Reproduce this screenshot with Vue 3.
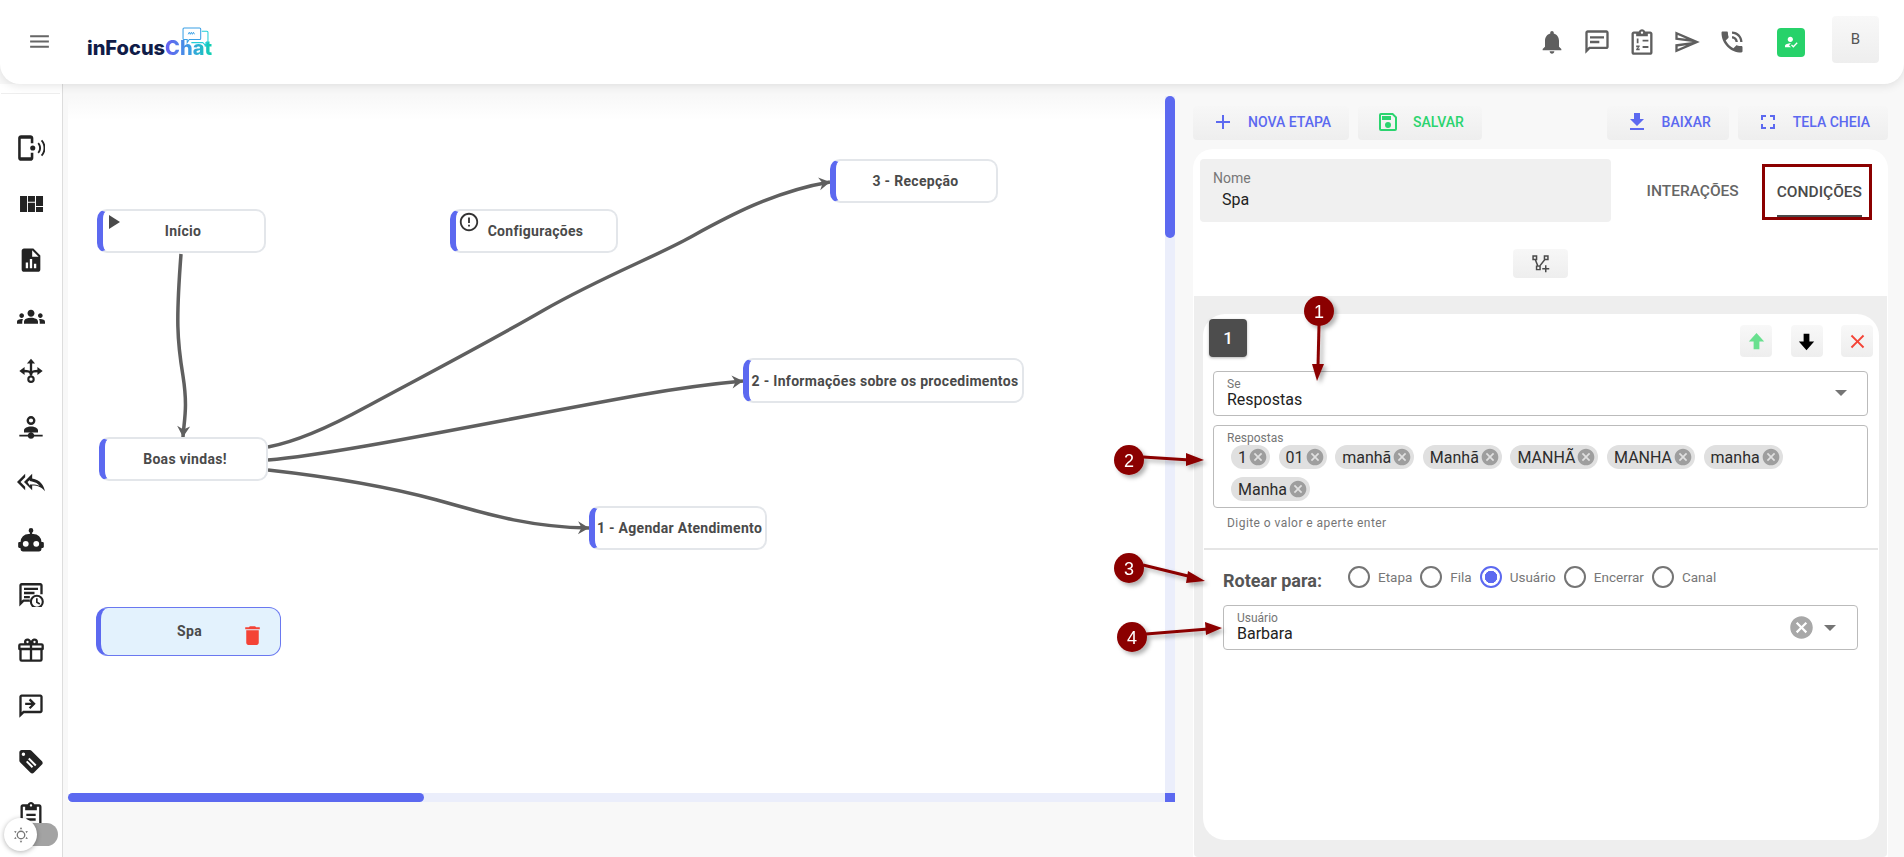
<script setup>
const sideIcons = [
  { id: 'ring', fill: 'M3.500 1h8C12.900 1 14 2.100 14 3.500V8h-2.200V4H3.200v16h8.600v-4H14v4.500c0 1.400-1.100 2.500-2.500 2.500h-8C2.100 23 1 21.900 1 20.500V3.500C1 2.100 2.100 1 3.500 1zM13.500 9.800a2.200 2.200 0 1 1 0 4.400a2.200 2.200 0 0 1 0-4.400zM17.600 8.400l1.100-1.100c2.500 2.500 2.500 6.900 0 9.400l-1.100-1.100c1.800-1.900 1.800-5.300 0-7.200zM20.500 6l1.100-1.100c3.800 3.800 3.800 10.400 0 14.200L20.500 18c3-3.200 3-8.800 0-12z' },
  { id: 'quilt', fill: 'M2.600 5.100h6v13.800h-6zM9.400 5.100h6V10h-6zM9.400 11h6v7.900h-6zM16.300 5.100h6v8.600h-6zM16.300 14.600h6v4.300h-6z' },
  { id: 'file', dy: 1, fill: 'M14 2H6C4.900 2 4 2.900 4 4v16c0 1.100.9 2 2 2h12c1.100 0 2-.9 2-2V8l-6-6zM9.500 19h-2v-5h2v5zm3.500 0h-2v-8h2v8zm3.500 0h-2v-4h2v4zM13 9V3.500L18.500 9H13z' },
  { id: 'groups', dy: 1.500, fill: 'M12 12.750c1.630 0 3.070.39 4.240.9 1.080.48 1.760 1.560 1.760 2.730V18H6v-1.610c0-1.180.68-2.260 1.760-2.730 1.170-.52 2.610-.91 4.240-.91zM4 13c1.100 0 2-.9 2-2s-.9-2-2-2-2 .9-2 2 .9 2 2 2zm1.130 1.100c-.37-.06-.74-.1-1.130-.1-.99 0-1.930.21-2.780.58C.48 14.900 0 15.620 0 16.430V18h4.500v-1.610c0-.83.23-1.610.63-2.290zM20 13c1.100 0 2-.9 2-2s-.9-2-2-2-2 .9-2 2 .9 2 2 2zm4 3.430c0-.81-.48-1.530-1.220-1.850-.85-.37-1.790-.58-2.780-.58-.39 0-.76.04-1.130.1.4.68.63 1.460.63 2.290V18H24v-1.570zM12 6c1.660 0 3 1.340 3 3s-1.340 3-3 3-3-1.340-3-3 1.340-3 3-3z' },
  { id: 'fork', fill: 'M12 1.500l3.500 4h-7zM2 12l4.500-3.500v7zM22 12l-4.500-3.500v7zM12 15.800a3.200 3.200 0 1 1 0 6.400a3.200 3.200 0 0 1 0-6.400zm0 1.800a1.400 1.400 0 1 0 0 2.800a1.400 1.400 0 0 0 0-2.800z', stroke: 'M12 16V5M12 15.500C12 12 9 12 5.500 12M12 15.500C12 12 15 12 18.500 12' },
  { id: 'person', dy: 1.500, fill: 'M12 2a3.800 3.800 0 1 1 0 7.600A3.800 3.800 0 0 1 12 2zM12 4a1.800 1.800 0 1 0 0 3.600A1.800 1.800 0 0 0 12 4zM12 11c3.200 0 6 1.400 6 3.200V16H6v-1.800C6 12.400 8.800 11 12 11zM2 18h7.200a3 3 0 0 1 5.600 0H22v1.600h-7.200a3 3 0 0 1-5.600 0H2z' },
  { id: 'reply', fill: 'M7 8V5l-7 7 7 7v-3l-4-4 4-4zm6 1V5l-7 7 7 7v-4.100c5 0 8.500 1.600 11 5.100-1-5-4-10-11-11zm-2 1.200v1l1.800.3c3 .5 5.200 1.900 6.700 3.900-2-.9-4.200-1.300-6.500-1.300h-2v1.100L9 12l2-1.800z' },
  { id: 'robot', dy: 1.500, fill: 'M12 2a2 2 0 0 1 2 2c0 .74-.4 1.390-1 1.730V7h1a7 7 0 0 1 7 7h1a1 1 0 0 1 1 1v3a1 1 0 0 1-1 1h-1v1a2 2 0 0 1-2 2H5a2 2 0 0 1-2-2v-1H2a1 1 0 0 1-1-1v-3a1 1 0 0 1 1-1h1a7 7 0 0 1 7-7h1V5.730C10.400 5.390 10 4.740 10 4a2 2 0 0 1 2-2zM7.500 13a2.500 2.500 0 1 0 0 5a2.500 2.500 0 0 0 0-5zm9 0a2.500 2.500 0 1 0 0 5a2.500 2.500 0 0 0 0-5z' },
  { id: 'sched', dy: 1.500, fill: 'M4 2h16c1.100 0 2 .9 2 2v7.500h-2V4H4v13.200L5.200 16H11v2H6l-4 4V4c0-1.100.9-2 2-2zM6 6h12v2H6zM6 9.500h9v2H6zM6 13h5v2H6zM17 12a6 6 0 1 1 0 12a6 6 0 0 1 0-12zm0 1.800a4.200 4.200 0 1 0 0 8.400a4.200 4.200 0 0 0 0-8.400zm-.7 1.200h1.400v3l2.200 1.300-.7 1.200-2.900-1.700z' },
  { id: 'gift', dy: 1, fill: 'M22 12v8a2 2 0 0 1-2 2H4a2 2 0 0 1-2-2v-8a1 1 0 0 1-1-1V8a2 2 0 0 1 2-2h3.170C6.060 5.690 6 5.350 6 5a3 3 0 0 1 3-3c1 0 1.880.5 2.430 1.240v-.01L12 4l.57-.77v.01C13.120 2.500 14 2 15 2a3 3 0 0 1 3 3c0 .35-.06.69-.17 1H21a2 2 0 0 1 2 2v3a1 1 0 0 1-1 1zM4 20h7v-8H4v8zm16 0v-8h-7v8h7zM9 4a1 1 0 1 0 0 2a1 1 0 0 0 0-2zm6 0a1 1 0 1 0 0 2a1 1 0 0 0 0-2zM3 8v2h8V8H3zm10 0v2h8V8h-8z' },
  { id: 'fwd', fill: 'M20 3H4c-1.100 0-2 .9-2 2v18l4-4h14c1.100 0 2-.9 2-2V5c0-1.100-.9-2-2-2zm0 14H5.170L4 18.170V5h16v12zM11.500 6.500l4.500 4.500-4.500 4.500-1.400-1.400 2.100-2.100H7v-2h5.200l-2.100-2.100z' },
  { id: 'tag', dy: 1.500, fill: 'M21.410 11.580l-9-9C12.050 2.220 11.550 2 11 2H4c-1.100 0-2 .9-2 2v7c0 .55.22 1.050.59 1.410l9 9c.36.36.86.59 1.410.59s1.050-.23 1.410-.59l7-7c.37-.36.59-.86.59-1.410s-.23-1.060-.59-1.420zM5.500 7A1.500 1.500 0 1 1 5.500 4a1.500 1.500 0 0 1 0 3zM9.500 9.800l1.200-1.200 6 6-1.200 1.200zM7.700 12.300l1.200-1.200 5 5-1.200 1.200z' },
  { id: 'clip', dy: -1, fill: 'M19 3h-4.180C14.400 1.840 13.300 1 12 1s-2.400.84-2.820 2H5c-1.100 0-2 .9-2 2v16c0 1.100.9 2 2 2h14c1.100 0 2-.9 2-2V5c0-1.100-.9-2-2-2zm-7 0c.55 0 1 .45 1 1s-.45 1-1 1-1-.45-1-1 .45-1 1-1zm7 18H5V5h2v3h10V5h2v16zM8 11h8v2H8zM8 15h8v2H8z' },
]

const nodes = [
  { name: 'Início', x: 29, y: 113, w: 169, h: 44, mark: 'play' },
  { name: 'Configurações', x: 382, y: 113, w: 168, h: 44, mark: 'info' },
  { name: 'Boas vindas!', x: 31, y: 341, w: 169, h: 44 },
  { name: '3 - Recepção', x: 762, y: 63, w: 168, h: 44 },
  { name: '2 - Informações sobre os procedimentos', x: 675, y: 262, w: 281, h: 45 },
  { name: '1 - Agendar Atendimento', x: 521, y: 410, w: 178, h: 44 },
]

const edges = [
  'M181 254 C176 320 177 340 183 376 C188 408 184 420 183 437',
  'M268 447 C300 441 335 424 366 407 C410 383 480 347 544 310 C600 278 652 258 687 239 C720 221 770 192 830 182',
  'M268 460 C340 454 500 420 640 395 C680 388 710 384 743 381',
  'M268 470 C340 478 400 490 437 500 C490 515 530 527 589 528',
]

const chips = ['1', '01', 'manhã', 'Manhã', 'MANHÃ', 'MANHA', 'manha', 'Manha']

const routes = [
  { label: 'Etapa' },
  { label: 'Fila' },
  { label: 'Usuário', on: true },
  { label: 'Encerrar' },
  { label: 'Canal' },
]

const notes = [
  { n: 1, cx: 1319, cy: 311, line: '1319,325 1318,366', head: '1312,364 1324,364 1317,381' },
  { n: 2, cx: 1129, cy: 460, line: '1143,457 1190,460', head: '1186,453 1186,466 1204,460' },
  { n: 3, cx: 1129, cy: 568, line: '1143,565 1192,577', head: '1188,571 1186,583 1205,581' },
  { n: 4, cx: 1132, cy: 637, line: '1146,634 1208,629', head: '1205,622 1206,635 1222,628' },
]
</script>

<template>
  <div class="app">
    <header class="topbar">
      <svg class="menu" viewBox="0 0 24 24"><path d="M3 18h18v-2H3v2zm0-5h18v-2H3v2zm0-7v2h18V6H3z" /></svg>
      <div class="logo">
        <svg class="logo-bubble" viewBox="0 0 26 24" fill="none">
          <path d="M2 1h15a1 1 0 0 1 1 1v9a1 1 0 0 1-1 1H7l-2 3v-3H2a1 1 0 0 1-1-1V2a1 1 0 0 1 1-1z" stroke="#3aa0e6" fill="#fff" />
          <path d="M19 4h5a1 1 0 0 1 1 1v9a1 1 0 0 1-1 1h-1v3l-3-3H9" stroke="#22cfd8" />
          <path d="M6 7l1-2 1 2 1-2 1 2 1-2 1 2" stroke="#3aa0e6" stroke-width=".9" />
        </svg>
        <span class="logo-a">inFocus</span><span class="logo-b">Chat</span>
      </div>
      <div class="top-actions">
        <svg class="top-ic" viewBox="0 0 24 24"><path d="M12 22c1.100 0 2-.9 2-2h-4c0 1.100.89 2 2 2zm6-6v-5c0-3.070-1.640-5.640-4.500-6.320V4c0-.83-.67-1.500-1.500-1.500s-1.500.67-1.500 1.500v.68C7.630 5.360 6 7.920 6 11v5l-2 2v1h16v-1l-2-2z" /></svg>
        <svg class="top-ic" viewBox="0 0 24 24"><path d="M20 2H4c-1.100 0-2 .9-2 2v18l4-4h14c1.100 0 2-.9 2-2V4c0-1.100-.9-2-2-2zm0 14H5.170L4 17.170V4h16v12zM6 7h12v2H6zM6 11h8v2H6z" /></svg>
        <svg class="top-ic" viewBox="0 0 24 24"><path d="M19 3h-4.180C14.400 1.840 13.300 1 12 1s-2.400.84-2.820 2H5c-1.100 0-2 .9-2 2v16c0 1.100.9 2 2 2h14c1.100 0 2-.9 2-2V5c0-1.100-.9-2-2-2zm-7 0c.55 0 1 .45 1 1s-.45 1-1 1-1-.45-1-1 .45-1 1-1zm7 18H5V5h2v2h10V5h2v16zM12.500 10h5v1.600h-5zM12.500 15.500h5v1.600h-5zM7.500 9h1.500v4H7.500zM7 15h3v1L8.500 17.500H10V19H7v-1l1.500-1.500H7z" /></svg>
        <svg class="top-ic" viewBox="0 0 24 24"><path d="M4.010 6.030l7.510 3.220-7.520-1 .01-2.220m7.500 8.720L4 17.970v-2.220l7.510-1M2.010 3L2 10l15 2-15 2 .01 7L23 12 2.010 3z" /></svg>
        <svg class="top-ic" viewBox="0 0 24 24"><path d="M20 15.500c-1.250 0-2.450-.2-3.570-.57-.35-.11-.74-.03-1.020.24l-2.200 2.200c-2.830-1.440-5.150-3.750-6.590-6.590l2.200-2.210c.28-.26.36-.65.25-1C8.700 6.450 8.500 5.250 8.500 4c0-.55-.45-1-1-1H4c-.55 0-1 .45-1 1 0 9.390 7.610 17 17 17 .55 0 1-.45 1-1v-3.500c0-.55-.45-1-1-1zM19 12h2c0-4.970-4.030-9-9-9v2c3.870 0 7 3.130 7 7zm-4 0h2c0-2.760-2.240-5-5-5v2c1.660 0 3 1.340 3 3z" /></svg>
        <div class="status">
          <svg viewBox="0 0 24 24"><path d="M9 17l3-2.940c-.39-.04-.68-.06-1-.06-2.670 0-8 1.340-8 4v2h9l-3-3zm2-5c2.210 0 4-1.790 4-4s-1.790-4-4-4-4 1.790-4 4 1.790 4 4 4m4.470 8.500L12 17l1.400-1.410 2.070 2.080 5.130-5.170 1.400 1.410z" /></svg>
        </div>
        <div class="avatar">B</div>
      </div>
    </header>

    <div class="body">
      <aside class="sidebar">
        <div class="side-rule"></div>
        <div class="side-list">
          <div v-for="icon in sideIcons" :key="icon.id" class="side-item">
            <svg viewBox="0 0 24 24">
              <g :transform="`translate(0 ${icon.dy || 0})`">
                <path :d="icon.fill" fill-rule="evenodd" />
                <path v-if="icon.stroke" :d="icon.stroke" class="side-stroke" />
              </g>
            </svg>
          </div>
        </div>
        <div class="theme">
          <div class="theme-knob">
            <svg viewBox="0 0 24 24" fill="none" stroke="#777" stroke-width="1.600">
              <circle cx="12" cy="12" r="4.500" />
              <path d="M12 2.500l1.500 2.500h-3zM12 21.500l1.500-2.500h-3zM3.800 7.300l2.900.1-1.500 2.500zM20.200 7.300l-2.900.1 1.500 2.500zM3.800 16.700l2.900-.1-1.500-2.500zM20.200 16.700l-2.900-.1 1.500-2.500z" fill="#777" stroke="none" />
            </svg>
          </div>
        </div>
      </aside>

      <section class="canvas">
        <svg class="wires" viewBox="68 96 1107 706">
          <defs>
            <marker id="tip" markerUnits="userSpaceOnUse" markerWidth="16" markerHeight="16" refX="12" refY="8" orient="auto">
              <path d="M1 1.500L12 8L1 14.500L4.500 8z" fill="#5f5f5f" />
            </marker>
          </defs>
          <path v-for="d in edges" :key="d" :d="d" fill="none" stroke="#5f5f5f" stroke-width="3.500" marker-end="url(#tip)" />
        </svg>

        <div
          v-for="node in nodes"
          :key="node.name"
          class="node"
          :style="{ left: node.x + 'px', top: node.y + 'px', width: node.w + 'px', height: node.h + 'px' }"
        >
          <svg v-if="node.mark === 'play'" class="mark-play" viewBox="0 0 11 14"><path d="M0 0l11 7-11 7z" /></svg>
          <svg v-if="node.mark === 'info'" class="mark-info" viewBox="0 0 24 24"><path d="M11 15h2v2h-2zm0-8h2v6h-2zm1-5C6.470 2 2 6.480 2 12s4.470 10 10 10 10-4.480 10-10S17.520 2 12 2zm0 18c-4.420 0-8-3.580-8-8s3.580-8 8-8 8 3.580 8 8-3.580 8-8 8z" /></svg>
          <span>{{ node.name }}</span>
        </div>

        <div class="node node-on">
          <span>Spa</span>
          <svg class="trash" viewBox="0 0 24 24"><path d="M6 19c0 1.100.9 2 2 2h8c1.100 0 2-.9 2-2V7H6v12zM19 4h-3.500l-1-1h-5l-1 1H5v2h14V4z" /></svg>
        </div>

        <div class="track-y"><div class="thumb-y"></div></div>
        <div class="track-x"><div class="thumb-x"></div></div>
        <div class="corner"></div>
      </section>

      <section class="editor">
        <div class="toolbar">
          <div class="tool-group">
            <button class="tool">
              <svg viewBox="0 0 24 24"><path d="M19 13h-6v6h-2v-6H5v-2h6V5h2v6h6v2z" /></svg>NOVA ETAPA
            </button>
            <button class="tool tool-green">
              <svg viewBox="0 0 24 24"><path d="M17 3H5a2 2 0 0 0-2 2v14a2 2 0 0 0 2 2h14a2 2 0 0 0 2-2V7l-4-4zm2 16H5V5h11.170L19 7.830V19zm-7-7a3 3 0 1 0 0 6a3 3 0 0 0 0-6zM6 6h9v4H6z" /></svg>SALVAR
            </button>
          </div>
          <div class="tool-group">
            <button class="tool">
              <svg viewBox="0 0 24 24"><path d="M19 9h-4V3H9v6H5l7 7 7-7zM5 18v2h14v-2H5z" /></svg>BAIXAR
            </button>
            <button class="tool">
              <svg viewBox="0 0 24 24"><path d="M7 14H5v5h5v-2H7v-3zm-2-4h2V7h3V5H5v5zm12 7h-3v2h5v-5h-2v3zM14 5v2h3v3h2V5h-5z" /></svg>TELA CHEIA
            </button>
          </div>
        </div>

        <div class="card">
          <div class="name-row">
            <div class="name-field">
              <div class="name-label">Nome</div>
              <div class="name-value">Spa</div>
            </div>
            <div class="tabs">
              <div class="tab">INTERAÇÕES</div>
              <div class="tab tab-on">CONDIÇÕES</div>
            </div>
          </div>

          <div class="branch-row">
            <button class="branch">
              <svg viewBox="0 0 24 24" fill="none" stroke="#4a4a4a" stroke-width="1.700">
                <path d="M3.500 3.500h4v4h-4zM16.500 3.500h4v4h-4zM7.500 15h4v4h-4zM6 7.500l3 7.500M17 7.500l-6 7.500M18 14v8M14 18h8" />
              </svg>
            </button>
          </div>

          <div class="panel">
            <div class="rule-card">
              <div class="rule-head">
                <div class="badge">1</div>
                <div class="rule-actions">
                  <button class="mini">
                    <svg viewBox="0 0 24 24"><path d="M9 20v-8H4l8-9 8 9h-5v8z" fill="#69e08f" /></svg>
                  </button>
                  <button class="mini">
                    <svg viewBox="0 0 24 24"><path d="M9 4v8H4l8 9 8-9h-5V4z" fill="#000" /></svg>
                  </button>
                  <button class="mini">
                    <svg viewBox="0 0 24 24"><path d="M19 6.410L17.590 5 12 10.590 6.410 5 5 6.410 10.590 12 5 17.590 6.410 19 12 13.410 17.590 19 19 17.590 13.410 12z" fill="#f44336" /></svg>
                  </button>
                </div>
              </div>

              <div class="cond">
                <div class="field">
                  <div class="field-label">Se</div>
                  <div class="field-value">Respostas</div>
                  <span class="caret"></span>
                </div>
                <div class="field field-chips">
                  <div class="field-label">Respostas</div>
                  <div class="chips">
                    <span v-for="chip in chips" :key="chip" class="chip">
                      {{ chip }}
                      <svg viewBox="0 0 24 24"><path d="M12 2C6.470 2 2 6.470 2 12s4.470 10 10 10 10-4.470 10-10S17.530 2 12 2zm5 13.590L15.590 17 12 13.410 8.410 17 7 15.590 10.590 12 7 8.410 8.410 7 12 10.590 15.590 7 17 8.410 13.410 12 17 15.590z" /></svg>
                    </span>
                  </div>
                </div>
                <div class="hint">Digite o valor e aperte enter</div>
              </div>

              <div class="divider"></div>

              <div class="route">
                <div class="route-row">
                  <div class="route-title">Rotear para:</div>
                  <label v-for="r in routes" :key="r.label" class="radio">
                    <span class="radio-dot" :class="{ 'radio-on': r.on }"></span>{{ r.label }}
                  </label>
                </div>
                <div class="field field-user">
                  <div class="field-label">Usuário</div>
                  <div class="field-value">Barbara</div>
                  <svg class="clear" viewBox="0 0 24 24"><path d="M12 2C6.470 2 2 6.470 2 12s4.470 10 10 10 10-4.470 10-10S17.530 2 12 2zm5 13.590L15.590 17 12 13.410 8.410 17 7 15.590 10.590 12 7 8.410 8.410 7 12 10.590 15.590 7 17 8.410 13.410 12 17 15.590z" /></svg>
                  <span class="caret caret-user"></span>
                </div>
              </div>
            </div>
          </div>
        </div>
      </section>
    </div>

    <svg class="notes" viewBox="0 0 1904 857">
      <defs>
        <filter id="soft" x="-30%" y="-30%" width="170%" height="170%">
          <feDropShadow dx="3" dy="3" stdDeviation="2" flood-color="#000" flood-opacity=".3" />
        </filter>
      </defs>
      <g v-for="note in notes" :key="note.n" filter="url(#soft)">
        <polyline :points="note.line" fill="none" stroke="#8b0000" stroke-width="3" />
        <polygon :points="note.head" fill="#8b0000" />
        <circle :cx="note.cx" :cy="note.cy" r="15" fill="#8b0000" />
        <text :x="note.cx" :y="note.cy + 6.500" class="note-num">{{ note.n }}</text>
      </g>
    </svg>
  </div>
</template>

<style>
html, body { margin: 0; background: #f8f8f8; overflow: hidden; }
</style>

<style scoped>
.app {
  position: relative;
  width: 1904px;
  height: 857px;
  overflow: hidden;
  background: #f8f8f8;
  font-family: Roboto, "Liberation Sans", sans-serif;
  color: #222;
}

/* header */
.topbar {
  position: relative;
  z-index: 2;
  height: 84px;
  display: flex;
  align-items: center;
  padding: 0 25px 0 27px;
  box-sizing: border-box;
  background: #fff;
  border-radius: 0 0 20px 20px;
  box-shadow: 0 2px 10px rgba(0, 0, 0, .1);
}
.menu { width: 25px; height: 25px; fill: #666; margin-top: -2px; }
.logo {
  position: relative;
  margin-left: 35px;
  margin-top: 12px;
  font-family: Inter, Roboto, sans-serif;
  font-weight: 800;
  font-size: 20px;
  line-height: 22px;
  white-space: nowrap;
}
.logo-a { color: #101c48; }
.logo-b {
  background: linear-gradient(90deg, #6a5cf2, #3a9fe2 55%, #0fd2b0);
  -webkit-background-clip: text;
  background-clip: text;
  color: transparent;
}
.logo-bubble { position: absolute; left: 95px; top: -10px; width: 27px; height: 25px; }
.top-actions { margin-left: auto; display: flex; align-items: center; }
.top-ic { width: 28px; height: 28px; fill: #5f5f5f; margin-left: 17px; }
.status {
  width: 28px;
  height: 29px;
  margin-left: 31px;
  background: #27d26a;
  border-radius: 4px;
  display: flex;
  align-items: center;
  justify-content: center;
}
.status svg { width: 16px; height: 16px; fill: #fff; }
.avatar {
  width: 47px;
  height: 47px;
  margin-left: 27px;
  margin-top: -6px;
  background: linear-gradient(#f8f8f8, #eeeeee);
  border-radius: 4px;
  display: flex;
  align-items: center;
  justify-content: center;
  font-size: 15px;
  color: #555;
}

/* layout */
.body { display: flex; height: 773px; }

/* sidebar */
.sidebar {
  position: relative;
  width: 62px;
  flex: none;
  background: #fff;
  border-right: 1px solid #ddd;
  overflow: hidden;
}
.side-rule { height: 1px; margin: 9px 2px 0 1px; background: #eee; }
.side-list { padding-top: 26px; }
.side-item { height: 55.700px; display: flex; align-items: center; justify-content: center; }
.side-item svg { width: 28px; height: 28px; fill: #232323; }
.side-stroke { fill: none; stroke: #232323; stroke-width: 2; }
.theme {
  position: absolute;
  left: 30px;
  top: 739px;
  width: 28px;
  height: 23px;
  border-radius: 0 12px 12px 0;
  background: #a3a3a3;
}
.theme-knob {
  position: absolute;
  left: -26px;
  top: -5px;
  width: 33px;
  height: 33px;
  border-radius: 50%;
  background: #fff;
  box-shadow: 0 1px 5px rgba(0, 0, 0, .3);
  display: flex;
  align-items: center;
  justify-content: center;
}
.theme-knob svg { width: 20px; height: 20px; }

/* canvas */
.canvas {
  position: relative;
  flex: none;
  width: 1107px;
  height: 706px;
  margin: 12px 0 0 5px;
  background: linear-gradient(#f8f8f8, #fff 24px);
  border-radius: 6px 0 0 0;
}
.wires { position: absolute; left: 0; top: 0; width: 1107px; height: 706px; }
.node {
  position: absolute;
  box-sizing: border-box;
  display: flex;
  align-items: center;
  justify-content: center;
  background: #fff;
  border: 2px solid #e3e6ea;
  border-left: 6px solid #5c69f0;
  border-radius: 10px;
  padding-right: 1px;
  font-size: 14px;
  font-weight: 700;
  letter-spacing: .3px;
  color: #4a4a4a;
  white-space: nowrap;
}
.mark-play { position: absolute; left: 6px; top: 4px; width: 11px; height: 14px; fill: #4a4a4a; }
.mark-info { position: absolute; left: 2px; top: 0; width: 22px; height: 22px; fill: #333; }
.node-on {
  left: 28px;
  top: 511px;
  width: 185px;
  height: 49px;
  background: #e3f2fd;
  border: 1px solid #6a78f0;
  border-left: 5px solid #5c69f0;
  border-radius: 12px;
  padding: 0 2px 2px 0;
}
.trash { position: absolute; right: 15px; top: 15px; width: 25px; height: 25px; fill: #f44336; }
.track-y { position: absolute; right: 0; top: 0; width: 10px; height: 697px; background: #ebeefb; }
.thumb-y { width: 10px; height: 142px; background: #5c69f0; border-radius: 5px; }
.track-x { position: absolute; left: 0; bottom: 0; width: 1097px; height: 9px; background: #ebeefb; border-radius: 5px 0 0 5px; }
.thumb-x { width: 356px; height: 9px; background: #5c69f0; border-radius: 5px; }
.corner { position: absolute; right: 0; bottom: 0; width: 10px; height: 9px; background: #5c69f0; }

/* editor */
.editor {
  flex: none;
  width: 695px;
  margin-left: 18px;
  display: flex;
  flex-direction: column;
}
.toolbar { display: flex; justify-content: space-between; margin-top: 22px; }
.tool-group { display: flex; gap: 9px; }
.tool {
  height: 34px;
  display: flex;
  align-items: center;
  gap: 13px;
  padding: 0 18px 2px;
  border: 0;
  border-radius: 4px;
  background: linear-gradient(#f7f7f7, #eeeeee);
  font: 500 14px Roboto, sans-serif;
  color: #5c69f0;
}
.tool svg { width: 24px; height: 24px; fill: #5c69f0; }
.tool-green { color: #2bd46f; }
.tool-green svg { fill: #2bd46f; }
.card {
  margin-top: 9px;
  flex: 1;
  display: flex;
  flex-direction: column;
  background: #fff;
  border-radius: 20px 20px 0 0;
}
.name-row { display: flex; padding: 10px 16px 0 7px; }
.name-field {
  box-sizing: border-box;
  width: 411px;
  height: 63px;
  background: #f0f0f0;
  border-radius: 4px;
  padding: 11px 0 0 13px;
}
.name-label { font-size: 14px; line-height: 16px; color: #777; }
.name-value { font-size: 16px; line-height: 20px; margin: 4px 0 0 9px; color: #222; }
.tabs { margin-left: auto; margin-top: 5px; display: flex; gap: 9px; }
.tab {
  box-sizing: border-box;
  height: 56px;
  padding: 0 14px 2px;
  display: flex;
  align-items: center;
  font-size: 15.500px;
  font-weight: 500;
  color: #666;
  position: relative;
}
.tab-on { border: 3px solid #8b0000; padding: 0 7px 1px 12px; color: #4a4a4a; }
.tab-on::after {
  content: "";
  position: absolute;
  left: 12px;
  right: 7px;
  bottom: 0;
  height: 2px;
  background: #4a4a4a;
}
.branch-row { display: flex; justify-content: center; margin-top: 27px; }
.branch {
  width: 55px;
  height: 29px;
  border: 0;
  border-radius: 4px;
  background: linear-gradient(#f7f7f7, #eeeeee);
  display: flex;
  align-items: center;
  justify-content: center;
  padding: 0;
}
.branch svg { width: 21px; height: 21px; }
.panel {
  flex: 1;
  margin: 18px 1px 0;
  padding: 18px 8px 17px 9px;
  background: #eeeeee;
  border-radius: 0 0 4px 4px;
  display: flex;
}
.rule-card { flex: 1; background: #fff; border-radius: 22px; box-sizing: border-box; }
.rule-head { display: flex; justify-content: space-between; padding: 5px 6px 0; }
.badge {
  width: 38px;
  height: 38px;
  border-radius: 4px;
  background: #4d4d4d;
  color: #fff;
  display: flex;
  align-items: center;
  justify-content: center;
  font-size: 17px;
  font-weight: 500;
  box-shadow: 0 1px 3px rgba(0, 0, 0, .3);
}
.rule-actions { display: flex; gap: 18.500px; margin-top: 6px; }
.mini {
  width: 32px;
  height: 32px;
  border: 0;
  padding: 0;
  border-radius: 4px;
  background: linear-gradient(#f8f8f8, #eeeeee);
  display: flex;
  align-items: center;
  justify-content: center;
}
.mini svg { width: 23px; height: 23px; }
.cond { padding: 14px 11px 0 10px; }
.field {
  position: relative;
  box-sizing: border-box;
  height: 45px;
  border: 1px solid #bbb;
  border-radius: 4px;
  padding: 5px 13px 0;
}
.field-label { font-size: 12px; line-height: 14px; color: #757575; }
.field-value { font-size: 16px; line-height: 20px; color: #222; margin-top: -1px; }
.caret {
  position: absolute;
  right: 20px;
  top: 18px;
  width: 0;
  height: 0;
  border: 6px solid transparent;
  border-top: 6px solid #757575;
  border-bottom: 0;
}
.field-chips { height: 83px; margin-top: 9px; }
.chips { display: flex; flex-wrap: wrap; gap: 8px 8.600px; margin: 0 0 0 4px; }
.chip {
  height: 24px;
  display: flex;
  align-items: center;
  gap: 1px;
  padding: 0 2px 0 7px;
  border-radius: 12px;
  background: #e0e0e0;
  font-size: 16px;
  color: #2c2c2c;
}
.chip svg { width: 20px; height: 20px; fill: #9e9e9e; }
.hint { margin: 8px 0 0 14px; font-size: 12px; line-height: 14px; color: #757575; letter-spacing: .45px; }
.divider { height: 2px; margin: 18px 1px 0; background: #e5e5e5; }
.route { padding: 16px 21px 0 20px; }
.route-row { display: flex; align-items: center; height: 22px; }
.route-title { font-size: 18px; line-height: 22px; font-weight: 700; color: #555; margin-right: 26px; margin-top: 8px; white-space: nowrap; }
.radio { display: flex; align-items: center; gap: 8px; margin-right: 8px; font-size: 13.500px; color: #777; height: 22px; }
.radio-dot {
  box-sizing: border-box;
  width: 22px;
  height: 22px;
  border: 2px solid #757575;
  border-radius: 50%;
}
.radio-on { border-color: #5c69f0; background: radial-gradient(circle, #5c69f0 0 6px, #fff 6.500px); }
.field-user { margin-top: 17px; }
.field-user .caret-user { right: 21px; top: 19px; }
.clear { position: absolute; right: 42px; top: 8px; width: 27px; height: 27px; fill: #a8a8a8; }

/* callouts */
.notes { position: absolute; left: 0; top: 0; width: 1904px; height: 857px; z-index: 3; pointer-events: none; }
.note-num { fill: #fff; font: 18px "Liberation Sans", sans-serif; text-anchor: middle; }
</style>
